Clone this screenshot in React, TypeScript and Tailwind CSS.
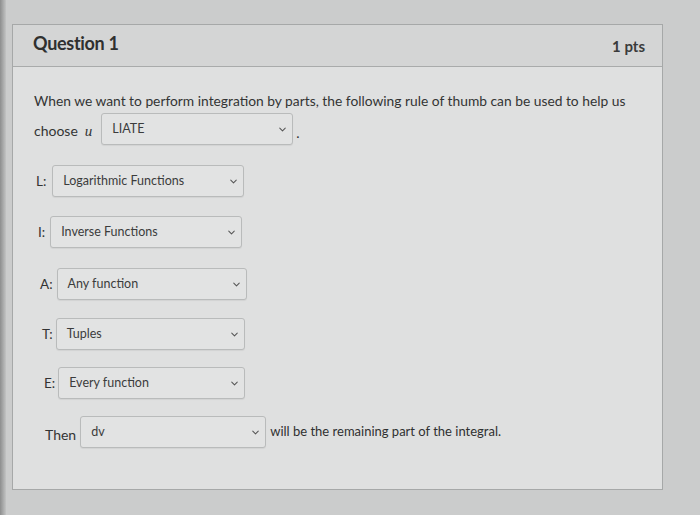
import { ChevronDown } from 'lucide-react';

const font = { fontFamily: 'Lato, "Open Sans", sans-serif' };

function Select({ value, width }: { value: string; width: string }) {
    return (
        <div className={`${width} h-[32px] border border-[#b9bbbb] bg-[#e2e3e3] rounded-[3px] flex items-center justify-between pl-[10px] pr-[4px] shadow-[0_1px_1px_rgba(0,0,0,0.06)]`}>
            <span className="text-[12.5px] text-[#3b3c3c] mt-[1px]">{value}</span>
            <ChevronDown size={11} strokeWidth={2.2} className="text-[#555]" />
        </div>
    );
}

const rows = [
    { label: 'L:', value: 'Logarithmic Functions', pad: 'pl-[23px]', gap: 'gap-[6px]', w: 'w-[192px]', mt: 'mt-[20px]' },
    { label: 'I:', value: 'Inverse Functions', pad: 'pl-[25px]', gap: 'gap-[5px]', w: 'w-[192px]', mt: 'mt-[19px]' },
    { label: 'A:', value: 'Any function', pad: 'pl-[27px]', gap: 'gap-[4px]', w: 'w-[190px]', mt: 'mt-[20px]' },
    { label: 'T:', value: 'Tuples', pad: 'pl-[29px]', gap: 'gap-[3px]', w: 'w-[189px]', mt: 'mt-[18px]' },
    { label: 'E:', value: 'Every function', pad: 'pl-[31px]', gap: 'gap-[3px]', w: 'w-[187px]', mt: 'mt-[17px]' },
];

export default function App() {
    return (
        <div className="w-[700px] h-[515px] bg-[#cbcccc] overflow-hidden flex" style={font}>
            {/* dark left edge of the screen */}
            <div className="w-[6px] h-full bg-gradient-to-r from-[#8d8e8e] to-[#c3c4c4]" />

            <div className="pl-[6px] pt-[24px]">
                <div className="w-[651px] h-[466px] border border-[#a6a8a8] bg-[#dfe0e0] flex flex-col">
                    {/* Header */}
                    <div className="h-[42px] bg-[#d4d5d5] border-b border-[#a9abab] flex items-center justify-between pl-[20px] pr-[17px]">
                        <h2 className="text-[18px] font-bold text-[#2f3030] -mt-[4px] tracking-[-0.3px]">Question 1</h2>
                        <span className="text-[15px] font-bold text-[#3a3b3b] mt-[2px]">1 pts</span>
                    </div>

                    {/* Body */}
                    <div className="pt-[24px] text-[#333434]">
                        <p className="pl-[21px] text-[13.8px] leading-[20px]">
                            When we want to perform integration by parts, the following rule of thumb can be used to help us
                        </p>
                        <div className="pl-[21px] mt-[2px] flex items-center">
                            <span className="text-[14px] mt-[3px]">choose</span>
                            <span className="ml-[7px] mt-[5px] text-[15px] italic" style={{ fontFamily: '"Liberation Serif", serif' }}>u</span>
                            <div className="ml-[9px]">
                                <Select value="LIATE" width="w-[192px]" />
                            </div>
                            <span className="ml-[3px] mt-[6px] text-[14px]">.</span>
                        </div>

                        {rows.map((r) => (
                            <div key={r.label} className={`${r.pad} ${r.mt} flex items-center ${r.gap}`}>
                                <span className="text-[13.5px] text-[#333]">{r.label}</span>
                                <Select value={r.value} width={r.w} />
                            </div>
                        ))}

                        <div className="pl-[32px] mt-[17px] flex items-center">
                            <span className="text-[14px] mt-[4px]">Then</span>
                            <div className="ml-[4px]">
                                <Select value="dv" width="w-[186px]" />
                            </div>
                            <span className="ml-[4px] text-[13px] -mt-[1px] text-[#2f3030]">will be the remaining part of the integral.</span>
                        </div>
                    </div>
                </div>
            </div>
        </div>
    );
}
